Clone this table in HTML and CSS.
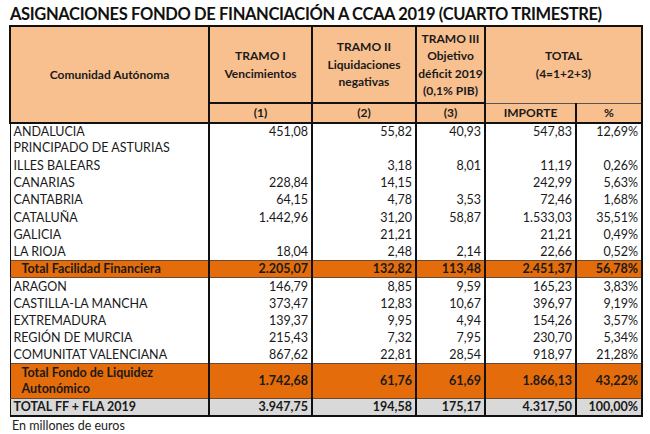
FILE: index.html
```html
<!DOCTYPE html>
<html lang="es">
<head>
<meta charset="utf-8">
<title>Asignaciones Fondo de Financiación a CCAA 2019</title>
<link rel="stylesheet" href="styles.css">
</head>
<body>
<div class="page">
  <h1 class="title">ASIGNACIONES FONDO DE FINANCIACIÓN A CCAA 2019 (CUARTO TRIMESTRE)</h1>
  <table class="grid">
    <colgroup>
      <col class="c-name"><col class="c-t1"><col class="c-t2"><col class="c-t3"><col class="c-imp"><col class="c-pct">
    </colgroup>
    <thead>
      <tr class="hrow1">
        <th rowspan="2" class="hname">Comunidad Autónoma</th>
        <th class="hlabel">TRAMO I<br>Vencimientos</th>
        <th class="hlabel">TRAMO II<br>Liquidaciones<br>negativas</th>
        <th class="hlabel">TRAMO III<br>Objetivo<br>déficit 2019<br>(0,1% PIB)</th>
        <th colspan="2" class="htotal">TOTAL<br>(4=1+2+3)</th>
      </tr>
      <tr class="hrow2">
        <th class="hnum">(1)</th>
        <th class="hnum">(2)</th>
        <th class="hnum">(3)</th>
        <th class="hsub">IMPORTE</th>
        <th class="hsub hpct">%</th>
      </tr>
    </thead>
    <tbody class="group1">
      <tr><td class="name">ANDALUCIA</td><td>451,08</td><td>55,82</td><td>40,93</td><td>547,83</td><td class="pct">12,69%</td></tr>
      <tr><td class="name">PRINCIPADO DE ASTURIAS</td><td></td><td></td><td></td><td></td><td class="pct"></td></tr>
      <tr><td class="name">ILLES BALEARS</td><td></td><td>3,18</td><td>8,01</td><td>11,19</td><td class="pct">0,26%</td></tr>
      <tr><td class="name">CANARIAS</td><td>228,84</td><td>14,15</td><td></td><td>242,99</td><td class="pct">5,63%</td></tr>
      <tr><td class="name">CANTABRIA</td><td>64,15</td><td>4,78</td><td>3,53</td><td>72,46</td><td class="pct">1,68%</td></tr>
      <tr><td class="name">CATALUÑA</td><td>1.442,96</td><td>31,20</td><td>58,87</td><td>1.533,03</td><td class="pct">35,51%</td></tr>
      <tr><td class="name">GALICIA</td><td></td><td>21,21</td><td></td><td>21,21</td><td class="pct">0,49%</td></tr>
      <tr><td class="name">LA RIOJA</td><td>18,04</td><td>2,48</td><td>2,14</td><td>22,66</td><td class="pct">0,52%</td></tr>
      <tr class="subtotal"><td class="name">Total Facilidad Financiera</td><td>2.205,07</td><td>132,82</td><td>113,48</td><td>2.451,37</td><td class="pct">56,78%</td></tr>
    </tbody>
    <tbody class="group2">
      <tr><td class="name">ARAGON</td><td>146,79</td><td>8,85</td><td>9,59</td><td>165,23</td><td class="pct">3,83%</td></tr>
      <tr><td class="name">CASTILLA-LA MANCHA</td><td>373,47</td><td>12,83</td><td>10,67</td><td>396,97</td><td class="pct">9,19%</td></tr>
      <tr><td class="name">EXTREMADURA</td><td>139,37</td><td>9,95</td><td>4,94</td><td>154,26</td><td class="pct">3,57%</td></tr>
      <tr><td class="name">REGIÓN DE MURCIA</td><td>215,43</td><td>7,32</td><td>7,95</td><td>230,70</td><td class="pct">5,34%</td></tr>
      <tr><td class="name">COMUNITAT VALENCIANA</td><td>867,62</td><td>22,81</td><td>28,54</td><td>918,97</td><td class="pct">21,28%</td></tr>
      <tr class="subtotal tall"><td class="name">Total Fondo de Liquidez<br>Autonómico</td><td>1.742,68</td><td>61,76</td><td>61,69</td><td>1.866,13</td><td class="pct">43,22%</td></tr>
    </tbody>
    <tfoot>
      <tr class="grand"><td class="name">TOTAL FF + FLA 2019</td><td>3.947,75</td><td>194,58</td><td>175,17</td><td>4.317,50</td><td class="pct">100,00%</td></tr>
    </tfoot>
  </table>
  <p class="note">En millones de euros</p>
</div>
</body>
</html>
```

FILE: styles.css
```css
html, body {
  margin: 0;
  padding: 0;
  background: #ffffff;
}

.page {
  width: 650px;
  height: 434px;
  overflow: hidden;
  font-family: Lato, "Open Sans", "Liberation Sans", sans-serif;
  color: #1a1a1a;
}

.title {
  margin: 0;
  padding: 0 0 0 10px;
  height: 25px;
  line-height: 29px;
  font-size: 16.5px;
  letter-spacing: -0.35px;
  font-weight: 700;
  color: #111;
  white-space: nowrap;
}

.grid {
  margin-left: 9px;
  width: 632px;
  table-layout: fixed;
  border-collapse: collapse;
  font-size: 12.5px;
}

.c-name { width: 199px; }
.c-t1 { width: 103px; }
.c-t2 { width: 104px; }
.c-t3 { width: 69px; }
.c-imp { width: 91px; }
.c-pct { width: 66px; }

/* header */
.grid th {
  background: #f9c08f;
  font-weight: 700;
  font-size: 12px;
  text-align: center;
  color: #1a1a1a;
  border: 2px solid #111;
  padding: 0;
  line-height: 17.5px;
}

.hrow1 { height: 77px; }
.hrow2 { height: 19px; }

.hlabel {
  border-bottom: none;
  vertical-align: middle;
}

.hnum {
  border-top: none;
  vertical-align: bottom;
}

.grid th.htotal {
  border-bottom: 1px solid #555;
}

.grid th.hsub {
  border-top: 1px solid #555;
}

.grid th.hpct {
  border-left: 1px solid #555;
}

/* body */
.grid td {
  padding: 0 3px;
  text-align: right;
  white-space: nowrap;
  border-left: 2px solid #111;
  border-right: 2px solid #111;
  line-height: 16px;
}

.grid td.name {
  text-align: left;
  border-left: 1px solid #111;
}

.grid td.pct {
  border-left: 1px solid #666;
}

.group1 tr { height: 17.3px; }
.group2 tr { height: 17.2px; }

.subtotal td {
  background: #e46c0a;
  font-weight: 700;
  border-top: 1px solid #6b4a33;
  border-bottom: 1px solid #6b4a33;
}

.group1 .subtotal { height: 15px; }

.grid .subtotal td.name {
  padding-left: 11px;
}

.group2 .tall { height: 35px; }

.grand td {
  background: #d9d9d9;
  font-weight: 700;
  border-bottom: 2px solid #111;
  border-top: 1px solid #555;
}

.grand { height: 17.5px; }

.note {
  margin: 0;
  padding: 1px 0 0 12px;
  font-size: 12.5px;
  line-height: 16px;
  color: #222;
}
```
